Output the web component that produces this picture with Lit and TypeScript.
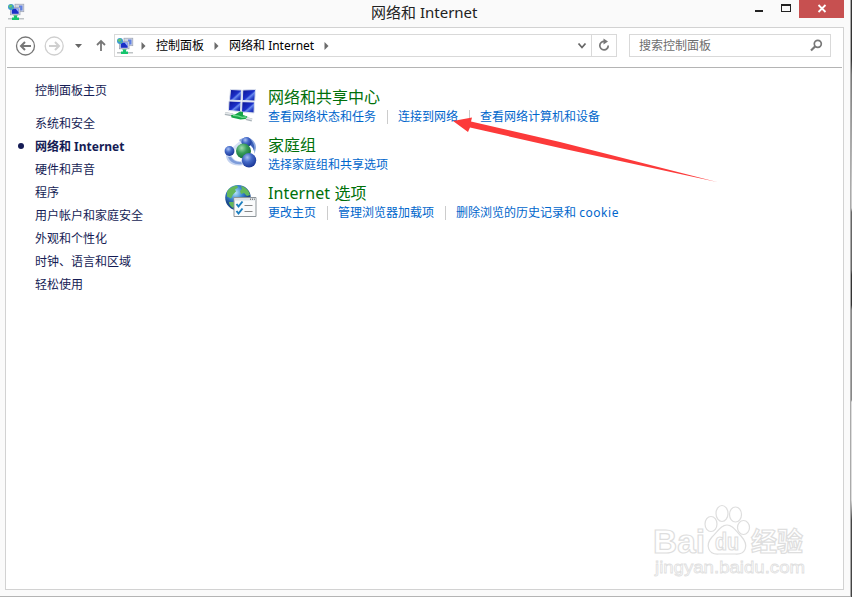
import { LitElement, html, css } from "lit";
import { customElement, property } from "lit/decorators.js";

const networkIcon = html`<svg width="18" height="18" viewBox="0 0 18 18">
  <rect x="8" y="1.200" width="8.800" height="7.500" fill="#d4d8e2" stroke="#9aa1b4" stroke-width=".7"/>
  <path d="M12 2.500h3.500v5H12z" fill="#5f80e4"/>
  <rect x="3.500" y="4.300" width="9.500" height="7.500" fill="#e2e5ee" stroke="#8f97aa" stroke-width=".7"/>
  <path d="M4.700 5.500h7v5.300h-7z" fill="#1a2fc6"/><path d="M8.500 5.500h3.200v4z" fill="#9db3f5"/>
  <circle cx="4" cy="4" r="3" fill="#3b9ad0"/><path d="M1.800 2.800l2.500-1.300 1.200 1.500-1.700 1.800-1.800-.6zM4.500 5.500l1.500-1v1.500z" fill="#66c964"/>
  <path d="M6.500 12.200h4v1h-4z" fill="#3fae78"/><path d="M7 13h3v1.500h2V17H5v-2.500h2z" fill="#14c46c"/>
  <path d="M1 15h4v1.500H1zM12 15h5v1.500h-5z" fill="#bfc4c6"/>
</svg>`;

const centerIcon = html`<svg width="34" height="35" viewBox="0 0 34 35">
  <defs><linearGradient id="s" x1="0" y1="0" x2="1" y2="1"><stop offset="0" stop-color="#0b1390"/><stop offset=".5" stop-color="#1b2fc8"/><stop offset=".6" stop-color="#6a8bee"/><stop offset=".75" stop-color="#2a44cc"/><stop offset="1" stop-color="#0f1b98"/></linearGradient></defs>
  <g stroke="#dde3ee" stroke-width="1" fill="url(#s)"><path d="M6.500 1.500l11 .5-.5 10.500-11.500-.3z"/><path d="M18.800 2l12.700-.5-.7 11.500-12.500-.5z"/><path d="M5 13l12 .5-.5 10-12-1z"/><path d="M18 13.700l12.500.3-.5 11-12.500-1z"/></g>
  <path d="M1 25.500l8 1.500M22 30.500l6 1.500" stroke="#a9b2b8" stroke-width="3.200"/><path d="M1 25l8 1.500M22 30l6 1.500" stroke="#e4e8ea" stroke-width="1.500"/>
  <path d="M7 27l4-.5 5-3 3 .5 0 3 4.500 1.500-2 2.500-5 .5-9-2z" fill="#17a548"/><path d="M9 27.300l5 .5 4 1.500 4-.3" fill="none" stroke="#6bda8b" stroke-width="1.300"/>
</svg>`;

const homeIcon = html`<svg width="34" height="34" viewBox="0 0 34 34">
  <defs><radialGradient id="b" cx=".38" cy=".3" r=".7"><stop offset="0" stop-color="#a9c0f2"/><stop offset=".45" stop-color="#456ac8"/><stop offset="1" stop-color="#1b3898"/></radialGradient>
  <radialGradient id="g" cx=".38" cy=".3" r=".7"><stop offset="0" stop-color="#9fdcae"/><stop offset=".5" stop-color="#369b58"/><stop offset="1" stop-color="#187238"/></radialGradient></defs>
  <path d="M15 4c8-5 17-1 17 8l-1.500 6c0-7-5-11-13-11z" fill="#8ba7de"/><path d="M27 4c3 3 4 7 3 11-1-4-3-6-5-7z" fill="#3c60b8"/>
  <path d="M2 19c0 8 8 12 17 10l-1-4c-6 1-9-2-11-6z" fill="#c3d2f0"/><path d="M4 21c2 5 7 8 14 7l-1-2c-5 0-8-2-10-5z" fill="#7d9cda"/>
  <path d="M9 11l7-6 2 3-7 6z" fill="#d6e1f5"/>
  <circle cx="22.500" cy="6" r="5" fill="url(#b)"/><circle cx="5.500" cy="15" r="4.900" fill="url(#b)"/>
  <circle cx="19.500" cy="15" r="7.500" fill="url(#g)"/><circle cx="25" cy="24.300" r="7.200" fill="url(#b)"/>
</svg>`;

const internetIcon = html`<svg width="34" height="34" viewBox="0 0 34 34">
  <defs><radialGradient id="w" cx=".4" cy=".3"><stop offset="0" stop-color="#b7e4fa"/><stop offset=".55" stop-color="#3b87cf"/><stop offset="1" stop-color="#1b4a8c"/></radialGradient></defs>
  <circle cx="14" cy="13.800" r="12.800" fill="url(#w)"/>
  <path d="M3 8c2-4 6-6 10-6.500l1 2-3 2 1 2-3 3-2 4-4-2zM17 2c5 1 8 5 9 9l-3 1-3-3-3 1-1-3 2-2zM5 18l5 0 1 3-2 3c-3-2-4-4-4-6z" fill="#63b85a"/>
  <path d="M10 13.500h22v19H10z" fill="#fafbfc" stroke="#8d9499"/><path d="M10.500 14h21v2.500h-21z" fill="#dde2e6"/><path d="M26 15.200h1M28 15.200h1M30 15.200h.8" stroke="#555"/>
  <path d="M12.500 20l2 2.500 4-5M12.500 27l2 2.500 4-5" fill="none" stroke="#1d7fc0" stroke-width="2"/><path d="M20.500 21.500h8M20.500 27.500h8" stroke="#888" stroke-width="1.200"/>
</svg>`;

const chevron = html`<svg class="chev" width="5" height="8"><path d="M.5 0l4 4-4 4z" fill="#6b6b6b"/></svg>`;

@customElement("category-row")
export class CategoryRow extends LitElement {
  @property() heading = "";
  @property({ attribute: false }) links: string[] = [];
  @property({ attribute: false }) icon: unknown;
  static styles = css`
    :host { display: flex; height: 48px; }
    svg { display: block; }
    .icon { width: 44px; flex: none; padding-top: 1px; }
    .heading { font-size: 16px; line-height: 20px; height: 21px; color: #00700a; white-space: nowrap; }
    .links { display: flex; font-size: 12px; line-height: 18px; color: #0066cc; white-space: nowrap; }
    .link + .link { margin-left: 11px; padding-left: 11px; position: relative; }
    .link + .link::before { content: ""; position: absolute; left: 0; top: 2px; width: 1px; height: 14px; background: #ccc; }
    .heading .latin { letter-spacing: 0.1px; }
    .links .latin { letter-spacing: 0.55px; }
  `;
  private spaced(text: string) {
    return text.split(/([A-Za-z]+)/).map((t) => (/^[A-Za-z]/.test(t) ? html`<span class="latin">${t}</span>` : t));
  }
  render() {
    return html`<div class="icon">${this.icon}</div>
      <div><div class="heading">${this.spaced(this.heading)}</div>
      <div class="links">${this.links.map((l) => html`<span class="link">${this.spaced(l)}</span>`)}</div></div>`;
  }
}

@customElement("app-root")
export class AppRoot extends LitElement {
  static styles = css`
    :host { display: block; width: 852px; height: 597px; position: relative; overflow: hidden; background: #fafafa;
      font-family: "Noto Sans", "Noto Sans CJK SC", sans-serif; font-size: 12px; color: #000; }
    * { box-sizing: border-box; }
    svg { display: block; }
    .titlebar { height: 27px; display: flex; position: relative; }
    .appicon { padding: 3px 0 0 7px; }
    .title { position: absolute; left: 371px; top: 0; font-size: 15px; line-height: 24px; white-space: nowrap; color: #222; }
    .controls { margin-left: auto; margin-right: 8px; display: flex; height: 18px; }
    .close { background: #c75050; }
    .frame { margin-left: 5px; width: 839px; height: 563px; border: 1px solid #d2d2d2; background: #fff; }
    .nav { height: 40px; margin: 0 1px; border-bottom: 1px solid #b4b4b4; display: flex; align-items: flex-start; padding-top: 6px; }
    .buttons { width: 107px; flex: none; }
    .address { width: 503px; height: 23px; border: 1px solid #d9d9d9; display: flex; align-items: center; white-space: nowrap; }
    .address .net { margin: 0 -3px 0 1px; }
    .address .crumb { padding-bottom: 2px; }
    .chev { margin: 0 10px; }
    .drop { margin-left: auto; width: 18px; }
    .refresh { height: 21px; width: 25px; border-left: 1px solid #d9d9d9; }
    .search { margin-left: 12px; width: 202px; height: 23px; border: 1px solid #d9d9d9; padding: 0 7px 2px 9px; display: flex; justify-content: space-between; align-items: center; color: #6d6d6d; }
    .search svg { margin-top: 2px; }
    .body { display: flex; }
    .side { width: 218px; padding: 11px 0 0 29px; color: #151c55; line-height: 23px; }
    .home { margin-bottom: 10px; }
    .on { font-weight: bold; position: relative; }
    .on::before { content: ""; position: absolute; left: -17px; top: 8px; width: 6px; height: 6px; border-radius: 50%; background: #151c55; }
    .main { padding-top: 19px; }
    .edge { position: absolute; right: 0; top: 0; width: 2px; height: 597px; border-left: 1px solid #aaa; background: linear-gradient(#333 0 60px, #777 75px, #ccc 190px 208px, #666 212px 270px, #333 275px 305px, #888 310px 400px, #ddd 402px 500px, #444 520px); }
    .bottom { position: absolute; left: 0; bottom: 0; width: 851px; height: 1px; background: #b4b4b4; }
    .arrow, .mark { position: absolute; left: 0; top: 0; }
  `;

  render() {
    const side = ["系统和安全", "网络和 Internet", "硬件和声音", "程序", "用户帐户和家庭安全", "外观和个性化", "时钟、语言和区域", "轻松使用"];
    const rows = [
      { h: "网络和共享中心", l: ["查看网络状态和任务", "连接到网络", "查看网络计算机和设备"], i: centerIcon },
      { h: "家庭组", l: ["选择家庭组和共享选项"], i: homeIcon },
      { h: "Internet 选项", l: ["更改主页", "管理浏览器加载项", "删除浏览的历史记录和 cookie"], i: internetIcon },
    ];
    return html`
      <div class="titlebar">
        <div class="appicon">${networkIcon}</div>
        <div class="title">网络和 Internet</div>
        <div class="controls">
          <svg width="54" height="18"><path d="M10 10h8v2h-8z" fill="#222"/><path d="M36 4h10v8H36z M37 6v5h8V6z" fill="#222" fill-rule="evenodd"/></svg>
          <svg class="close" width="45" height="18"><path d="M19.500 5l7 7M26.500 5l-7 7" stroke="#fff" stroke-width="1.800"/></svg>
        </div>
      </div>
      <div class="frame">
        <div class="nav">
          <svg class="buttons" width="107" height="23" fill="none">
            <circle cx="18.500" cy="12" r="9" stroke="#777" stroke-width="1.300"/><path d="M24 12H14.500M18 8l-4 4 4 4" stroke="#777" stroke-width="2"/>
            <circle cx="47.200" cy="12" r="9" stroke="#cfcfcf" stroke-width="1.300"/><path d="M42 12h9.500M48 8l4 4-4 4" stroke="#cfcfcf" stroke-width="2"/>
            <path d="M68 10h7l-3.500 4z" fill="#666"/><path d="M94 17V7.500M90 11l4-4 4 4" stroke="#777" stroke-width="1.800"/>
          </svg>
          <div class="address"><span class="net">${networkIcon}</span>${chevron}<span class="crumb">控制面板</span>${chevron}<span class="crumb">网络和 Internet</span>${chevron}
            <svg class="drop" width="18" height="21" fill="none"><path d="M5.500 8.500l3.500 4 3.500-4" stroke="#666" stroke-width="1.800"/></svg>
            <svg class="refresh" width="25" height="21" fill="none"><path d="M12.500 6.500a4.200 4.200 0 1 0 3.700 4" stroke="#777" stroke-width="1.700"/><path d="M11.500 3.500l4.500 3-4.500 3z" fill="#777"/></svg>
          </div>
          <div class="search"><span>搜索控制面板</span><svg width="13" height="13" fill="none" stroke="#777"><circle cx="7.800" cy="4.800" r="3.500" stroke-width="1.700"/><path d="M5.300 7.300L1 11.500" stroke-width="2.200"/></svg></div>
        </div>
        <div class="body">
          <div class="side"><div class="home">控制面板主页</div>${side.map((s, i) => html`<div class=${i === 1 ? "on" : ""}>${s}</div>`)}</div>
          <div class="main">${rows.map((r) => html`<category-row .heading=${r.h} .links=${r.l} .icon=${r.i}></category-row>`)}</div>
        </div>
      </div>
      <svg class="mark" width="852" height="597" fill="#fff" stroke="#dedede" stroke-width="1.200" font-family="Liberation Sans, Noto Sans CJK SC, sans-serif" font-weight="bold">
        <text x="653" y="553" font-size="34" textLength="52" lengthAdjust="spacingAndGlyphs">Bai</text>
        <ellipse cx="711" cy="524" rx="6" ry="7.500"/><ellipse cx="722" cy="513.500" rx="6" ry="8"/><ellipse cx="735.500" cy="514.500" rx="6" ry="7.500"/><ellipse cx="743.500" cy="527.500" rx="6" ry="7"/>
        <path d="M727 525c6 0 9 6 14 11 9 10 4 19-6 18h-16c-11 1-14-9-7-17 6-6 9-12 15-12z"/>
        <text x="715" y="550" font-size="23" textLength="24" lengthAdjust="spacingAndGlyphs">du</text>
        <text x="751" y="551" font-size="26" textLength="52">经验</text>
        <text x="655" y="573" font-size="17" font-family="Liberation Sans" font-weight="normal" stroke="#dfdfdf" stroke-width=".8" textLength="150" lengthAdjust="spacingAndGlyphs">jingyan.baidu.com</text>
      </svg>
      <svg class="arrow" width="852" height="597"><path d="M453 121L472 117.500 471 121.500 560 142 717 182 560 148 470 127.500 468 132z" fill="#fc3a3a"/></svg>
      <div class="bottom"></div><div class="edge"></div>`;
  }
}
